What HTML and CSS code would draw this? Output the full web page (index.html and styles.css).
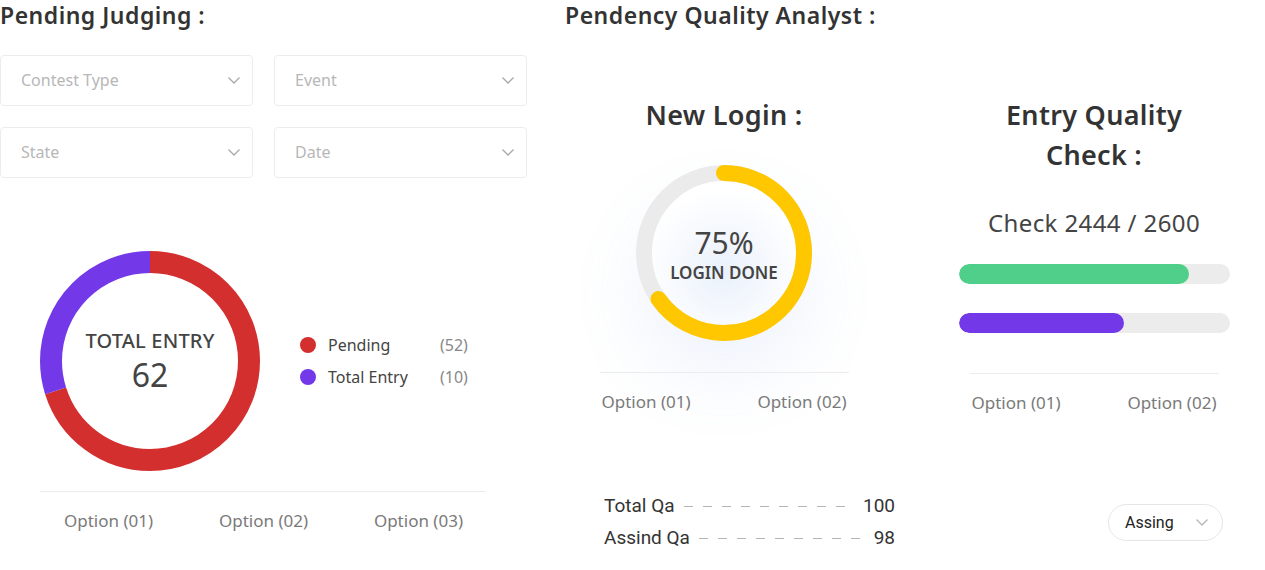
FILE: index.html
```html
<!DOCTYPE html>
<html>
<head>
<meta charset="utf-8">
<link rel="stylesheet" href="styles.css">
</head>
<body>
<div class="page">
  <section class="left">
    <h2 class="title">Pending Judging :</h2>
    <div class="filters">
      <div class="select"><span>Contest Type</span><svg class="chev" width="12" height="7" viewBox="0 0 12 7"><polyline points="0.5,0.5 6,6 11.5,0.5"/></svg></div>
      <div class="select"><span>Event</span><svg class="chev" width="12" height="7" viewBox="0 0 12 7"><polyline points="0.5,0.5 6,6 11.5,0.5"/></svg></div>
      <div class="select"><span>State</span><svg class="chev" width="12" height="7" viewBox="0 0 12 7"><polyline points="0.5,0.5 6,6 11.5,0.5"/></svg></div>
      <div class="select"><span>Date</span><svg class="chev" width="12" height="7" viewBox="0 0 12 7"><polyline points="0.5,0.5 6,6 11.5,0.5"/></svg></div>
    </div>
    <div class="chart-row">
      <div class="donut">
        <svg class="donut-svg" width="220" height="220" viewBox="0 0 220 220">
          <g transform="rotate(-90 110 110)">
            <circle cx="110" cy="110" r="99" fill="none" stroke="#d32f2f" stroke-width="22" stroke-dasharray="435.4 622.04"/>
            <circle cx="110" cy="110" r="99" fill="none" stroke="#7339e8" stroke-width="22" stroke-dasharray="186.64 622.04" stroke-dashoffset="-435.4"/>
          </g>
        </svg>
        <div class="donut-label">
          <div class="dl-title">TOTAL ENTRY</div>
          <div class="dl-num">62</div>
        </div>
      </div>
      <div class="legend">
        <span class="dot red"></span><span class="lg-name">Pending</span><span class="lg-val">(52)</span>
        <span class="dot purple"></span><span class="lg-name">Total Entry</span><span class="lg-val">(10)</span>
      </div>
    </div>
    <div class="options three">
      <span>Option (01)</span><span>Option (02)</span><span>Option (03)</span>
    </div>
  </section>

  <section class="right">
    <h2 class="title">Pendency Quality Analyst :</h2>
    <div class="cards">
      <div class="card">
        <h3 class="card-title">New Login :</h3>
        <div class="ring">
          <svg class="ring-svg" width="176" height="176" viewBox="0 0 176 176">
            <circle cx="88" cy="88" r="80" fill="none" stroke="#ebebeb" stroke-width="16"/>
            <g transform="rotate(-90 88 88)">
              <circle cx="88" cy="88" r="80" fill="none" stroke="#ffc700" stroke-width="16" stroke-linecap="round" stroke-dasharray="327.4 502.65"/>
            </g>
          </svg>
          <div class="ring-label">
            <div class="rl-num">75%</div>
            <div class="rl-text">LOGIN DONE</div>
          </div>
        </div>
        <div class="options two">
          <span>Option (01)</span><span>Option (02)</span>
        </div>
      </div>
      <div class="card">
        <h3 class="card-title">Entry Quality<br>Check :</h3>
        <div class="check">Check 2444 / 2600</div>
        <div class="bars">
          <div class="bar"><div class="fill green" style="width: 85%"></div></div>
          <div class="bar"><div class="fill purple" style="width: 61%"></div></div>
        </div>
        <div class="options two">
          <span>Option (01)</span><span>Option (02)</span>
        </div>
      </div>
    </div>
    <div class="qa-row">
      <div class="qa-list">
        <div class="qa-item"><span class="qa-name">Total Qa</span><span class="qa-dash"></span><span class="qa-val">100</span></div>
        <div class="qa-item"><span class="qa-name">Assind Qa</span><span class="qa-dash"></span><span class="qa-val">98</span></div>
      </div>
      <div class="pill"><span>Assing</span><svg class="chev" width="12" height="7" viewBox="0 0 12 7"><polyline points="0.5,0.5 6,6 11.5,0.5"/></svg></div>
    </div>
  </section>
</div>
</body>
</html>
```

FILE: styles.css
```css
* { box-sizing: border-box; }
html, body { margin: 0; padding: 0; background: #fff; }
body {
  font-family: "Noto Sans", "Liberation Sans", sans-serif;
  color: #333;
  width: 1265px;
  height: 570px;
  overflow: hidden;
}
.page {
  display: flex;
  gap: 38px;
}
.left { width: 527px; flex: none; }
.right { flex: 1; }
.title {
  margin: 0;
  font-size: 23px;
  line-height: 30px;
  font-weight: 600;
  letter-spacing: 0.5px;
  color: #333;
  white-space: nowrap;
}
.filters {
  margin-top: 25px;
  display: grid;
  grid-template-columns: 253px 253px;
  gap: 21px;
}
.select {
  height: 51px;
  border: 1px solid #ececec;
  border-radius: 4px;
  display: flex;
  align-items: center;
  justify-content: space-between;
  padding: 0 12px 1px 20px;
  font-size: 16px;
  color: #b7b7b7;
}
.chev { fill: none; stroke: #a8a8a8; stroke-width: 1.3; }
.chart-row {
  margin-top: 73px;
  margin-left: 40px;
  display: flex;
  align-items: center;
  gap: 40px;
}
.donut {
  display: grid;
  width: 220px;
  height: 220px;
}
.donut-svg, .donut-label { grid-area: 1 / 1; }
.donut-label {
  align-self: center;
  justify-self: center;
  text-align: center;
  color: #444;
}
.dl-title { font-size: 20px; line-height: 24px; font-weight: 500; letter-spacing: 0.2px; }
.dl-num { font-size: 32px; line-height: 36px; margin-top: 4px; }
.legend {
  display: grid;
  grid-template-columns: 16px 100px auto;
  column-gap: 12px;
  row-gap: 16px;
  align-items: center;
  font-size: 16px;
  line-height: 16px;
}
.dot { width: 16px; height: 16px; border-radius: 50%; }
.dot.red { background: #d32f2f; }
.dot.purple { background: #7339e8; }
.lg-name { color: #444; }
.lg-val { color: #888; }
.options {
  display: flex;
  justify-content: space-between;
  border-top: 1px solid #ececec;
  color: #7a7a7a;
  font-size: 17px;
  line-height: 24px;
}
.options.three {
  margin: 20px 41px 0 40px;
  padding: 17px 23px 0 24px;
}
.cards {
  display: grid;
  grid-template-columns: 318px 318px;
  gap: 52px;
}
.card {
  display: flex;
  flex-direction: column;
  align-items: center;
}
.card-title {
  margin: 65px 0 0;
  font-size: 27px;
  line-height: 40px;
  font-weight: 600;
  letter-spacing: 0.3px;
  color: #333;
  text-align: center;
}
.ring {
  margin-top: 30px;
  display: grid;
  width: 176px;
  height: 176px;
  border-radius: 50%;
  box-shadow: 0 40px 70px rgba(110, 150, 225, 0.10);
  background: radial-gradient(circle at 50% 60%, rgba(225, 235, 250, 0.7), rgba(255,255,255,0) 60%);
}
.ring-svg, .ring-label { grid-area: 1 / 1; }
.ring-label {
  align-self: center;
  justify-self: center;
  text-align: center;
  color: #444;
  margin-top: 2px;
}
.rl-num { font-size: 30px; line-height: 36px; }
.rl-text { font-size: 17px; line-height: 20px; font-weight: 600; margin-top: 2px; }
.options.two {
  width: 249px;
  padding: 17px 2px 0;
}
.card .ring + .options.two { margin-top: 31px; }
.check {
  margin-top: 33px;
  font-size: 24px;
  line-height: 30px;
  letter-spacing: 0.4px;
  color: #444;
}
.bars {
  margin-top: 26px;
  width: 271px;
  display: flex;
  flex-direction: column;
  gap: 29px;
}
.bar {
  height: 20px;
  border-radius: 10px;
  background: #ececec;
  overflow: hidden;
}
.fill { height: 100%; border-radius: 10px; }
.fill.green { background: #4fcf89; }
.fill.purple { background: #7339e8; }
.bars + .options.two { margin-top: 40px; }
.qa-row {
  margin-top: 75px;
  padding: 0 42px 0 39px;
  display: flex;
  align-items: center;
  justify-content: space-between;
}
.qa-list { width: 291px; }
.qa-item {
  display: flex;
  align-items: center;
  gap: 9px;
  font-family: Roboto, "Liberation Sans", sans-serif;
  font-size: 19px;
  line-height: 32px;
  color: #333;
}
.qa-dash {
  flex: 1;
  height: 1px;
  background-image: linear-gradient(to right, #b5b5b5 9px, transparent 9px);
  background-size: 19px 1px;
  background-repeat: repeat-x;
}
.pill {
  width: 115px;
  height: 37px;
  border: 1px solid #e6e6e6;
  border-radius: 19px;
  display: flex;
  align-items: center;
  justify-content: space-between;
  padding: 0 14px 0 16px;
  font-family: Roboto, "Liberation Sans", sans-serif;
  font-size: 16px;
  color: #222;
}
.pill .chev { stroke: #b5b5b5; }
```
